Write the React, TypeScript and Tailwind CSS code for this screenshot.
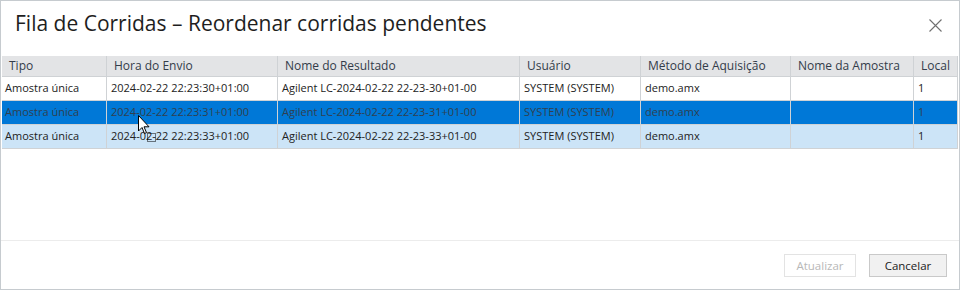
type Run = {
  tipo: string;
  hora: string;
  resultado: string;
  usuario: string;
  metodo: string;
  amostra: string;
  local: string;
};

const runs: Run[] = [
  {
    tipo: "Amostra única",
    hora: "2024-02-22 22:23:30+01:00",
    resultado: "Agilent LC-2024-02-22 22-23-30+01-00",
    usuario: "SYSTEM (SYSTEM)",
    metodo: "demo.amx",
    amostra: "",
    local: "1",
  },
  {
    tipo: "Amostra única",
    hora: "2024-02-22 22:23:31+01:00",
    resultado: "Agilent LC-2024-02-22 22-23-31+01-00",
    usuario: "SYSTEM (SYSTEM)",
    metodo: "demo.amx",
    amostra: "",
    local: "1",
  },
  {
    tipo: "Amostra única",
    hora: "2024-02-22 22:23:33+01:00",
    resultado: "Agilent LC-2024-02-22 22-23-33+01-00",
    usuario: "SYSTEM (SYSTEM)",
    metodo: "demo.amx",
    amostra: "",
    local: "1",
  },
];

const cols = "grid grid-cols-[105px_171px_242px_121px_150px_123px_1fr]";

const rowBg = ["bg-white", "bg-[#0078d7]", "bg-[#cce4f7]"];

function CloseIcon() {
  return (
    <svg width="13" height="13" viewBox="0 0 13 13" className="mt-[12px]">
      <path d="M0.5 0.5 L12.5 12.5 M12.5 0.5 L0.5 12.5" stroke="#707070" strokeWidth="1.1" />
    </svg>
  );
}

function Cursor() {
  return (
    <svg
      className="pointer-events-none absolute left-[137px] top-[114px]"
      width="22"
      height="30"
      viewBox="0 0 22 30"
    >
      <path
        d="M0.5 0.5 L0.5 16 L4 12.5 L6.5 18.5 L8.5 17.6 L6 11.8 L11 11.8 Z"
        fill="#fff"
        stroke="#000"
        strokeWidth="1"
      />
      <rect
        x="9.5"
        y="18.5"
        width="8"
        height="8"
        fill="none"
        stroke="#000"
        strokeWidth="1"
        strokeDasharray="1 1"
      />
    </svg>
  );
}

export default function App() {
  return (
    <div className="relative flex h-[290px] w-[960px] flex-col border border-[#c6cbcf] bg-white font-['Open_Sans',sans-serif] text-[#222]">
      <header className="flex h-[55px] items-start justify-between pl-[14px] pr-[17px] pt-[6px]">
        <h1 className="text-[21px] leading-[32px] text-[#1e1e1e]">
          Fila de Corridas – Reordenar corridas pendentes
        </h1>
        <CloseIcon />
      </header>

      <div className="mx-px flex-1 text-[11px]">
        <div className={`${cols} h-[21px] border-b border-[#cfd2d5] bg-[#e3e4e6] text-[12px] text-[#333c4a]`}>
          {["Tipo", "Hora do Envio", "Nome do Resultado", "Usuário", "Método de Aquisição", "Nome da Amostra", "Local"].map(
            (h, i) => (
              <div
                key={h}
                className={`flex items-center border-r border-[#cfd2d5] ${i === 6 ? "pl-[7px]" : "pl-[7px]"}`}
              >
                {h}
              </div>
            ),
          )}
        </div>
        {runs.map((r, i) => (
          <div key={r.hora} className={`${cols} h-[24px] border-b border-[#cfd2d5] ${rowBg[i]} ${i === 1 ? "text-[#30404f]" : ""}`}>
            {[r.tipo, r.hora, r.resultado, r.usuario, r.metodo, r.amostra, r.local].map((c, j) => (
              <div key={j} className={`flex items-center border-r border-[#cfd2d5] ${j === 0 ? "pl-[3px]" : "pl-[4px]"}`}>
                {c}
              </div>
            ))}
          </div>
        ))}
      </div>

      <footer className="flex h-[49px] items-start justify-end gap-[13px] border-t border-[#ececec] pr-[12px] pt-[13px] text-[11.5px]">
        <button className="h-[23px] w-[72px] border border-[#e3e3e3] bg-white text-[#b8b8b8]">Atualizar</button>
        <button className="h-[23px] w-[78px] border border-[#c9c9c9] bg-[#f1f1f1] text-[#222]">Cancelar</button>
      </footer>

      <Cursor />
    </div>
  );
}
